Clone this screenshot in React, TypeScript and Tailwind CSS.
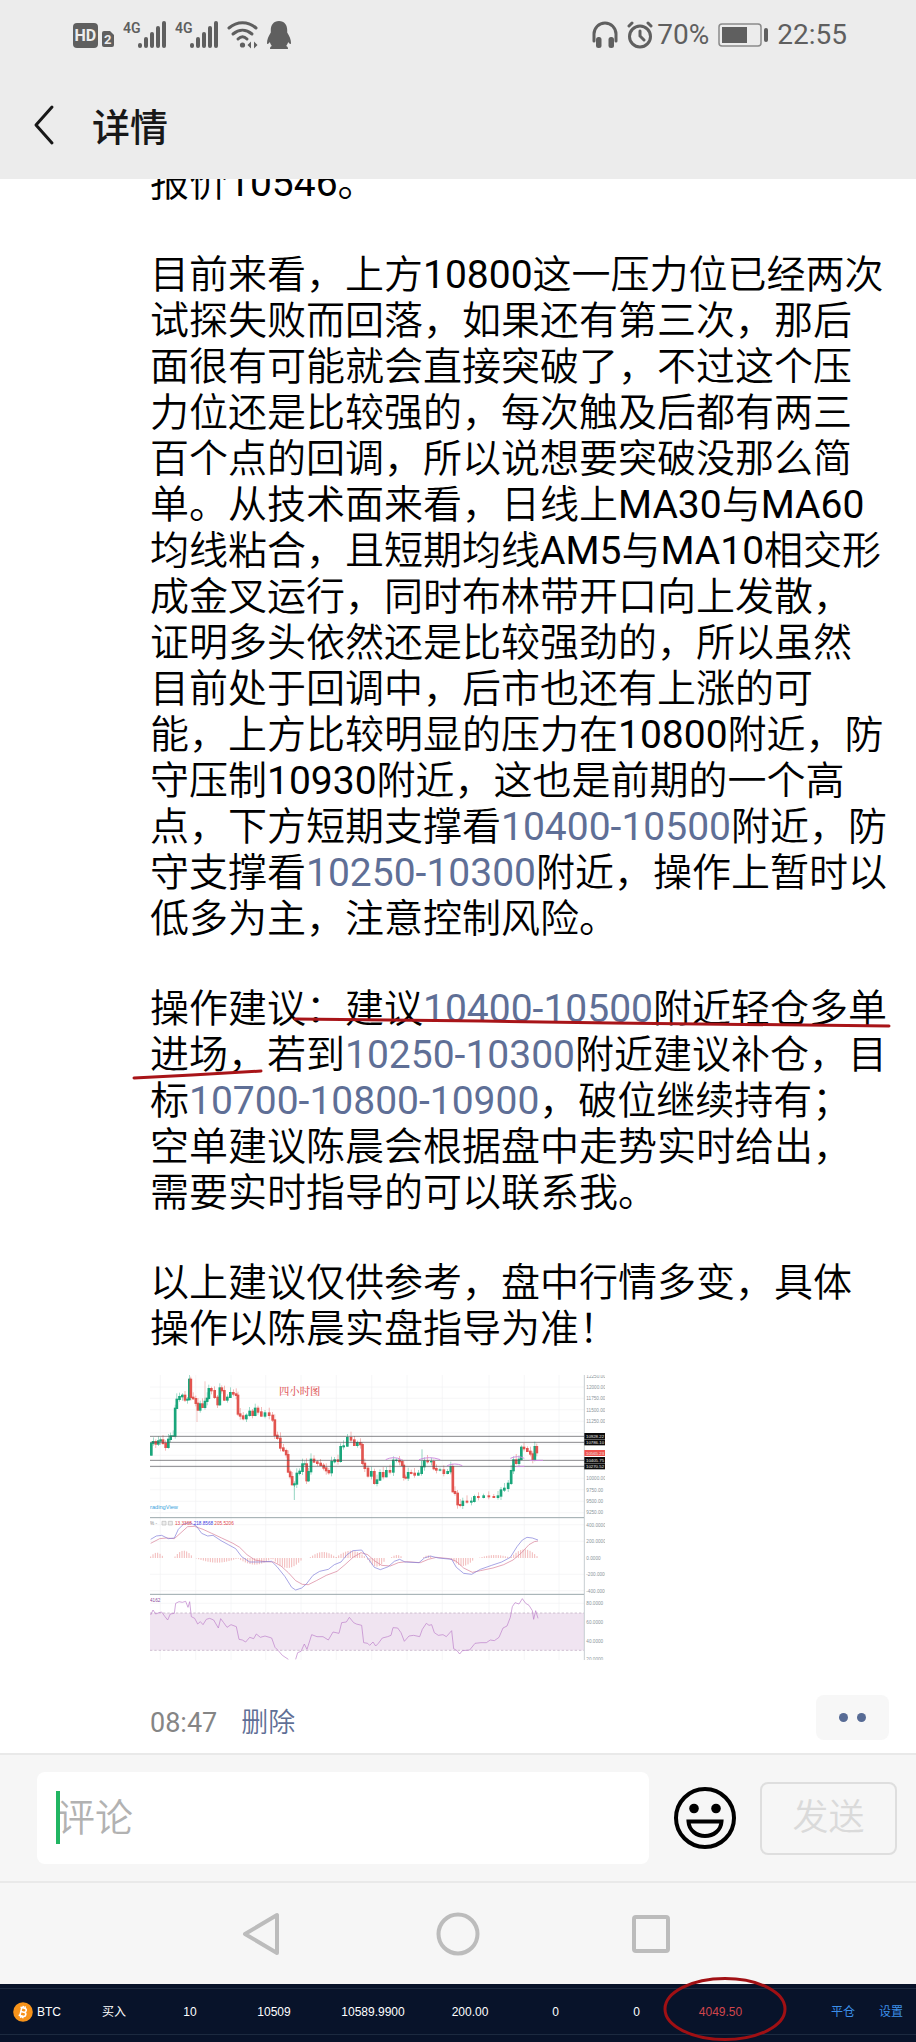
import type { ReactNode } from "react";

type Point = [number, number];

const PRICE: Point[] = [
  [33, 285], [37, 250], [45, 245], [52, 252], [60, 243], [66, 240], [74, 250], [82, 262], [90, 238], [96, 228],
  [105, 228], [108, 145], [115, 118], [124, 110], [132, 106], [140, 120], [147, 118], [151, 58], [156, 112],
  [165, 116], [172, 130], [178, 150], [185, 132], [192, 142], [200, 124], [205, 115], [210, 86], [220, 92],
  [230, 112], [238, 134], [243, 84], [250, 92], [258, 120], [268, 112], [276, 98], [286, 102], [293, 106],
  [297, 162], [306, 168], [315, 176], [325, 166], [335, 154], [343, 166], [350, 145], [360, 156], [370, 168],
  [382, 159], [395, 166], [403, 180], [408, 226], [418, 235], [426, 264], [436, 272], [443, 284], [448, 336],
  [455, 350], [460, 374], [468, 372], [475, 340], [485, 334], [492, 312], [499, 312], [503, 362], [510, 335],
  [518, 298], [528, 306], [538, 310], [548, 316], [556, 324], [563, 332], [572, 338], [580, 305], [590, 300],
  [600, 304], [606, 260], [618, 258], [628, 233], [640, 240], [648, 256], [658, 248], [666, 254], [671, 310],
  [680, 325], [690, 348], [700, 335], [708, 370], [716, 360], [726, 338], [735, 350], [745, 332], [757, 336],
  [765, 301], [775, 301], [784, 305], [791, 316], [794, 352], [802, 354], [809, 338], [820, 340], [830, 345],
  [842, 340], [850, 320], [858, 303], [870, 305], [880, 305], [885, 326], [895, 330], [907, 330], [918, 340],
  [930, 335], [937, 320], [942, 395], [950, 400], [958, 434], [965, 436], [974, 424], [990, 426], [1000, 424],
  [1008, 410], [1024, 412], [1040, 408], [1055, 410], [1070, 412], [1080, 408], [1088, 390], [1100, 385],
  [1111, 370], [1118, 332], [1125, 300], [1134, 310], [1142, 298], [1148, 262], [1158, 266], [1168, 274],
  [1176, 282], [1183, 298], [1188, 260], [1195, 278],
];

const RSI: Point[] = [
  [33, 765], [40, 750], [48, 762], [58, 758], [66, 756], [76, 770], [84, 780], [92, 762], [104, 760], [108, 730],
  [118, 725], [128, 727], [138, 724], [145, 742], [150, 725], [155, 770], [165, 775], [174, 792], [182, 785],
  [190, 794], [200, 778], [210, 775], [222, 780], [236, 804], [243, 776], [252, 788], [262, 802], [274, 794],
  [290, 800], [298, 838], [308, 840], [318, 846], [330, 832], [342, 836], [350, 822], [362, 832], [376, 828],
  [396, 834], [406, 862], [416, 872], [428, 886], [446, 898],
];
const RSI_LATE: Point[] = [
  [468, 898], [474, 878], [484, 874], [494, 852], [502, 868], [516, 824], [532, 830], [550, 830], [566, 840],
  [580, 816], [598, 820], [606, 788], [620, 786], [629, 772], [642, 788], [650, 792], [666, 796], [672, 848],
  [684, 850], [690, 856], [700, 846], [708, 858], [716, 850], [728, 834], [744, 830], [754, 826], [760, 803],
  [774, 804], [784, 818], [794, 844], [808, 828], [822, 826], [840, 830], [848, 808], [860, 790], [868, 796],
  [876, 794], [884, 818], [896, 826], [910, 824], [920, 830], [936, 812], [942, 866], [952, 872], [960, 882],
  [968, 872], [990, 870], [1006, 850], [1024, 848], [1040, 848], [1052, 840], [1064, 842], [1078, 832],
  [1090, 804], [1102, 798], [1112, 772], [1118, 740], [1126, 728], [1138, 732], [1148, 716], [1158, 730],
  [1168, 736], [1178, 752], [1182, 778], [1188, 752], [1195, 775],
];

const MACD: Point[] = [
  [33, 538], [50, 528], [66, 526], [86, 536], [104, 534], [116, 508], [132, 492], [150, 488], [170, 498],
  [186, 520], [204, 528], [220, 526], [244, 542], [266, 554], [288, 566], [306, 590], [330, 606], [360, 606],
  [396, 604], [412, 620], [436, 650], [456, 682], [468, 690], [486, 684], [500, 672], [520, 646], [540, 634],
  [566, 628], [584, 614], [604, 606], [622, 584], [640, 572], [666, 570], [684, 594], [704, 622], [722, 629],
  [746, 620], [764, 604], [780, 598], [796, 606], [838, 608], [854, 594], [872, 588], [896, 594], [936, 598],
  [950, 622], [972, 640], [996, 643], [1022, 628], [1056, 616], [1086, 606], [1112, 592], [1132, 560],
  [1148, 540], [1162, 532], [1178, 534], [1195, 540],
];
const SIGNAL: Point[] = [
  [33, 550], [60, 536], [80, 534], [104, 536], [124, 518], [144, 500], [164, 499], [190, 508], [216, 520],
  [246, 534], [280, 550], [300, 562], [322, 584], [346, 600], [376, 605], [402, 606], [424, 618], [446, 638],
  [468, 662], [488, 673], [506, 674], [530, 662], [560, 646], [592, 634], [616, 614], [640, 592], [664, 578],
  [684, 584], [704, 602], [726, 616], [752, 618], [776, 608], [800, 605], [842, 608], [866, 598], [890, 592],
  [930, 596], [950, 604], [972, 624], [998, 637], [1022, 632], [1060, 624], [1092, 614], [1120, 600],
  [1146, 578], [1168, 554], [1184, 545], [1195, 543],
];

// [start, end, peak]; a negative peak hangs below the zero line
const HISTOGRAM: [number, number, number][] = [
  [33, 72, 16], [106, 160, 22], [170, 296, -14], [296, 398, -20], [400, 490, -30], [512, 590, 18],
  [590, 680, 22], [684, 740, -26], [756, 790, 9], [852, 880, 8], [936, 1005, -24], [1020, 1115, 9],
  [1115, 1196, 26],
];

const AXIS: [string, number][] = [
  ["12250.00", 53], ["12000.00", 87], ["11750.00", 121], ["11500.00", 155], ["11250.00", 189],
  ["10000.00", 361], ["9750.00", 395], ["9500.00", 429], ["9250.00", 463],
  ["400.0000", 500], ["200.0000", 550], ["0.0000", 599], ["-200.0000", 648], ["-400.0000", 698],
  ["80.0000", 736], ["60.0000", 792], ["40.0000", 849], ["20.0000", 904],
];

const TAGS: [string, number, string][] = [
  ["10928.22", 228, "#0b0b0b"],
  ["10786.10", 247, "#0b0b0b"],
  ["10565.23", 279, "#f05350"],
  ["10405.75", 300, "#0b0b0b"],
  ["10270.52", 319, "#0b0b0b"],
];

const toLine = (points: Point[]) => points.map((p) => p.join(",")).join(" ");

const Chart = () => {
  const bars: ReactNode[] = [];
  HISTOGRAM.forEach(([start, end, peak]) => {
    for (let x = start; x < end; x += 7) {
      const h = Math.sin(((x - start + 4) / (end - start + 6)) * Math.PI) * peak;
      bars.push(
        <line key={`${start}-${x}`} x1={x} x2={x} y1={594} y2={594 - h} stroke="#eb9595" strokeWidth={2} />
      );
    }
  });

  return (
    <svg
      viewBox="31 45 1365 855"
      className="block w-[455px] max-w-full"
      role="img"
      aria-label="四小时图"
      fontFamily='"Liberation Sans", "Noto Sans CJK SC", sans-serif'
    >
      <rect x={31} y={45} width={1365} height={855} fill="#fff" />
      <g stroke="#f1f3f4" strokeWidth={2}>
        {[62, 168, 274, 378, 484, 590, 696, 802, 908, 1048, 1154, 1258].map((x) => (
          <line key={x} x1={x} x2={x} y1={45} y2={900} />
        ))}
        {[81, 115, 149, 184, 218, 252, 286, 321, 355, 389, 424, 458, 494, 544, 643, 692, 730, 787].map((y) => (
          <line key={y} x1={31} x2={1333} y1={y} y2={y} />
        ))}
      </g>

      <rect x={31} y={759} width={1302} height={112} fill="#f0e4f1" />
      <path d="M31 759H1333M31 871H1333" stroke="#b9a6bd" strokeWidth={2} strokeDasharray="7 6" />
      <path d="M31 473H1333M31 703H1333" stroke="#9ba8ab" strokeWidth={3} />
      <path d="M1334 45V900" stroke="#a9b4b9" strokeWidth={2} />

      {PRICE.slice(1).map(([x, y], i) => {
        const prev = PRICE[i];
        const color = y <= prev[1] ? "#1aa67b" : "#e2544f";
        const top = Math.min(y, prev[1]) - 2;
        const bottom = Math.max(y, prev[1]) + 2;
        const wick = 4 + ((i * 7) % 13);
        const mid = (x + prev[0]) / 2;
        return (
          <g key={x} fill={color}>
            <rect x={mid - 1} y={top - wick} width={2} height={bottom - top + wick + ((i * 5) % 11)} opacity={0.6} />
            <rect x={mid - 4} y={top} width={8} height={bottom - top} />
          </g>
        );
      })}
      <path d="M464 370V420M847 268V330" stroke="#1aa67b" strokeWidth={2} opacity={0.7} />
      <path d="M172 130V186M196 64V120" stroke="#e2544f" strokeWidth={2} opacity={0.5} />
      <path d="M31 229H1333M31 247H1333M31 301H1333M31 319H1333" stroke="#4c4c50" strokeWidth={2} />
      <g fill="none" stroke="#cf8fe0" strokeWidth={3}>
        <path d="M738 299q24-12 48 0" />
        <path d="M838 299q30-12 64 0" />
        <path d="M922 317q24-10 46 0" />
        <path d="M1112 295q22-10 42 0" />
        <path d="M1130 319h24M1170 301h40" />
      </g>

      {bars}
      <polyline points={toLine(SIGNAL)} fill="none" stroke="#d67a94" strokeWidth={2} />
      <polyline points={toLine(MACD)} fill="none" stroke="#7b78d8" strokeWidth={2} />
      <polyline points={toLine(RSI)} fill="none" stroke="#bb7cc9" strokeWidth={2} />
      <polyline points={toLine(RSI_LATE)} fill="none" stroke="#bb7cc9" strokeWidth={2} />

      <text x={418} y={106} fontSize={31} fontWeight={500} fill="#e0595b" fontFamily='"Noto Serif CJK SC", "Noto Sans CJK SC", serif'>
        四小时图
      </text>
      <text x={31} y={448} fontSize={17} fill="#3ba4dc">radingView</text>
      <g fontSize={14}>
        <text x={31} y={495} fill="#888">% -</text>
        <text x={106} y={495} fill="#e0464a">13.3368</text>
        <text x={162} y={495} fill="#3c3ce0">218.8568</text>
        <text x={224} y={495} fill="#e0464a">205.5206</text>
        <text x={31} y={725} fill="#8a4d9c">4162</text>
      </g>
      <path d="M67 484h12v11h-12zM86 484h12v11h-12z" fill="#eee" stroke="#bbb" strokeWidth={2} />

      <g fontSize={14} fill="#8b959b">
        {AXIS.map(([label, y]) => (
          <text key={label} x={1340} y={y}>{label}</text>
        ))}
      </g>
      {TAGS.map(([label, y, fill]) => (
        <g key={label}>
          <rect x={1334} y={y - 9} width={62} height={18} fill={fill} />
          <text x={1339} y={y + 5} fontSize={13} fill="#e6e6e6">{label}</text>
        </g>
      ))}
    </svg>
  );
};

const Signal = () => (
  <svg viewBox="0 0 44 28" className="h-7 w-11" fill="#5f5f5f" aria-hidden="true">
    <text x="0" y="12" fontSize="14" fontWeight="600" fontFamily='"Roboto", sans-serif'>4G</text>
    <rect x="15" y="22" width="4" height="5" rx="2" />
    <rect x="21" y="16" width="4" height="11" rx="2" />
    <rect x="27" y="11" width="4" height="16" rx="2" />
    <rect x="33" y="5" width="4" height="22" rx="2" />
    <rect x="39" y="0" width="4" height="27" rx="2" />
  </svg>
);

const StatusBar = () => (
  <div className="flex h-[70px] items-center justify-between pl-[73px] pr-[69px] text-[28px] leading-none text-[#5f5f5f]">
    <div className="flex items-center">
      <svg viewBox="0 0 42 28" className="h-7 w-[42px]" aria-hidden="true" fontFamily='"Roboto", sans-serif' fontWeight="700">
        <rect x="0" y="2" width="25" height="25" rx="4" fill="#5f5f5f" />
        <text x="1.500" y="20" fontSize="16" fill="#ececec">HD</text>
        <path d="M29 12a2 2 0 0 1 2-2h6l4 4v10a2 2 0 0 1-2 2h-8a2 2 0 0 1-2-2z" fill="#5f5f5f" />
        <text x="31" y="23" fontSize="13" fill="#ececec">2</text>
      </svg>
      <div className="ml-2 flex gap-2">
        <Signal />
        <Signal />
      </div>
      <svg viewBox="0 0 32 28" className="ml-2 h-7 w-8" fill="none" stroke="#5f5f5f" strokeWidth="3" strokeLinecap="round" aria-hidden="true">
        <path d="M2 7C10 0 21 0 29 7" />
        <path d="M6 13c6-5 13-5 19 0" />
        <path d="M11 18c3-3 6-3 9 0" />
        <circle cx="15.500" cy="24" r="2.600" fill="#5f5f5f" stroke="none" />
        <path d="M24 20.500v7L20.500 24zM27 20.500v7l3.500-3.500z" fill="#5f5f5f" stroke="none" />
      </svg>
      <svg viewBox="0 0 24 28" className="ml-2 h-7 w-6" fill="#5f5f5f" aria-hidden="true">
        <path d="M12 0C6.500 0 3.800 4 3.800 9v2.500C1.500 15 0 18.500 0 22c0 1.500 1 1.500 2.800-1 .4 1.500 1 2.800 2 4-1.300.5-1.800 1.300-1.800 3h18c0-1.700-.5-2.500-1.800-3 1-1.200 1.600-2.500 2-4 1.800 2.500 2.800 2.500 2.800 1 0-3.500-1.500-7-3.800-10.500V9C20.200 4 17.500 0 12 0z" />
      </svg>
    </div>
    <div className="flex items-center">
      <svg viewBox="0 0 26 28" className="h-7 w-[26px]" aria-hidden="true">
        <path d="M2 20V13a11 11 0 0 1 22 0V20" fill="none" stroke="#5f5f5f" strokeWidth="3" strokeLinecap="round" />
        <rect x="4" y="16" width="5.500" height="11" rx="2.500" fill="#5f5f5f" />
        <rect x="16.500" y="16" width="5.500" height="11" rx="2.500" fill="#5f5f5f" />
      </svg>
      <svg viewBox="0 0 26 28" className="ml-[9px] h-7 w-[26px]" fill="none" stroke="#5f5f5f" strokeWidth="3" strokeLinecap="round" aria-hidden="true">
        <circle cx="13" cy="15.500" r="10.500" />
        <path d="M13 10v5l4 4M2 5l3-3M24 5l-3-3" />
      </svg>
      <span className="ml-1">70%</span>
      <svg viewBox="0 0 50 24" className="ml-[9px] h-6 w-[50px]" aria-hidden="true">
        <rect x="1" y="1" width="42" height="22" rx="3" fill="none" stroke="#8a8a8a" strokeWidth="1.500" />
        <rect x="4" y="4" width="25" height="16" fill="#5f5f5f" />
        <rect x="46" y="5" width="4" height="14" rx="2" fill="#5f5f5f" />
      </svg>
      <span className="ml-[9px]">22:55</span>
    </div>
  </div>
);

const Num = ({ children }: { children: ReactNode }) => (
  <a href="#quote" className="text-[#5f6f96]">{children}</a>
);

const Article = () => (
  <article className="pl-[150px] pr-[27px] text-[39px] leading-[46px] text-black">
    <p className="-mt-[19px]">报价10546。</p>
    <p className="mt-[46px]">
      目前来看，上方10800这一压力位已经两次试探失败而回落，如果还有第三次，那后面很有可能就会直接突破了，不过这个压力位还是比较强的，每次触及后都有两三百个点的回调，所以说想要突破没那么简单。从技术面来看，日线上MA30与MA60均线粘合，且短期均线AM5与MA10相交形成金叉运行，同时布林带开口向上发散，证明多头依然还是比较强劲的，所以虽然目前处于回调中，后市也还有上涨的可能，上方比较明显的压力在10800附近，防守压制10930附近，这也是前期的一个高点，下方短期支撑看<Num>10400-10500</Num>附近，防守支撑看<Num>10250-10300</Num>附近，操作上暂时以低多为主，注意控制风险。
    </p>
    <div className="relative mt-11">
      <p>
        操作建议：建议<Num>10400-10500</Num>附近轻仓多单进场，若到<Num>10250-10300</Num>附近建议补仓，目标<Num>10700-10800-10900</Num>，破位继续持有；
        <br />
        空单建议陈晨会根据盘中走势实时给出，需要实时指导的可以联系我。
      </p>
      <svg viewBox="0 0 760 100" className="pointer-events-none absolute -left-[18px] top-0 h-[100px] w-[760px]" fill="none" stroke="#a81418" strokeWidth="3" strokeLinecap="round" aria-hidden="true">
        <path d="M163 33L350 35L480 37L757 40" />
        <path d="M2 92L60 89L129 85" />
      </svg>
    </div>
    <p className="mt-11">以上建议仅供参考，盘中行情多变，具体操作以陈晨实盘指导为准！</p>
    <div className="mt-[23px]">
      <Chart />
    </div>
    <div className="mt-[35px] flex items-end pb-[13px] text-[27px] leading-[34px]">
      <time className="text-[#858585]">08:47</time>
      <button className="ml-6 text-[#5f6f96]">删除</button>
      <button aria-label="更多" className="ml-auto flex h-[45px] w-[73px] items-center justify-center gap-[9px] rounded-lg bg-[#f7f7f7]">
        <span className="size-[9px] rounded-full bg-[#576b95]" />
        <span className="size-[9px] rounded-full bg-[#576b95]" />
      </button>
    </div>
  </article>
);

const Composer = () => (
  <form className="flex items-center border-t-2 border-[#e9e9e9] bg-[#f6f6f6] pb-[17px] pl-[37px] pr-[19px] pt-[17px]">
    <div className="relative min-w-0 flex-1">
      <input
        aria-label="评论"
        placeholder="评论"
        className="block h-[92px] w-full rounded-lg bg-white pl-5 pr-4 text-[38px] text-[#111] outline-none placeholder:text-[#b2b2b2]"
      />
      <span className="pointer-events-none absolute left-[19px] top-[19px] h-[53px] w-1 bg-[#21b562]" />
    </div>
    <button type="button" aria-label="表情" className="ml-6">
      <svg viewBox="0 0 64 64" className="block size-16" fill="none" stroke="#000" strokeWidth="4">
        <circle cx="32" cy="32" r="29" />
        <circle cx="21" cy="22.500" r="4.800" fill="#000" stroke="none" />
        <circle cx="43" cy="22.500" r="4.800" fill="#000" stroke="none" />
        <path d="M15.500 35.500H48.500C48 44.500 40.500 50 32 50S16 44.500 15.500 35.500z" />
      </svg>
    </button>
    <button type="button" className="ml-[23px] h-[73px] w-[137px] rounded-lg border-2 border-[#dedede] text-[36px] font-light text-[#dadada]">
      发送
    </button>
  </form>
);

const NavBar = () => (
  <nav className="flex h-[103px] items-center justify-center gap-[152px] border-t-2 border-[#e9e9e9] bg-[#f6f6f6]">
    <button aria-label="返回">
      <svg viewBox="0 0 44 44" className="block size-11" fill="none" stroke="#bcbcbc" strokeWidth="4" strokeLinejoin="round">
        <path d="M5 22L37 3V41z" />
      </svg>
    </button>
    <button aria-label="主页">
      <svg viewBox="0 0 44 44" className="block size-11" fill="none" stroke="#bcbcbc" strokeWidth="4">
        <circle cx="22" cy="22" r="19.500" />
      </svg>
    </button>
    <button aria-label="最近任务">
      <svg viewBox="0 0 44 44" className="block size-11" fill="none" stroke="#bcbcbc" strokeWidth="4">
        <rect x="2" y="5" width="34" height="34" rx="2" />
      </svg>
    </button>
  </nav>
);

const Positions = () => (
  <div className="relative bg-[#08132a] py-1 font-['Liberation_Sans','Noto_Sans_CJK_SC',sans-serif] text-xs text-white">
    <table className="w-full table-fixed text-center">
      <tbody>
        <tr className="h-[46px] border-y border-[#1c2a40]">
          <td className="w-[76px] pl-[13px]">
            <div className="flex items-center gap-1">
              <svg viewBox="0 0 20 20" className="size-5 shrink-0" aria-hidden="true">
                <circle cx="10" cy="10" r="9.800" fill="#f7931a" />
                <g transform="rotate(13 10 10)" fill="none" stroke="#fff" strokeWidth="1.600">
                  <path d="M7.800 6v8.200M6.500 6h4.300a2 2 0 0 1 0 4H8M10.800 10h.4a2.100 2.100 0 0 1 0 4.200H6.500M9 4v2M11 4v2M9 14.200v2M11 14.200v2" />
                </g>
              </svg>
              <span>BTC</span>
            </div>
          </td>
          <td className="w-[76px]">买入</td>
          <td className="w-[76px]">10</td>
          <td className="w-[92px]">10509</td>
          <td className="w-[106px]">10589.9900</td>
          <td className="w-[88px]">200.00</td>
          <td className="w-[83px]">0</td>
          <td className="w-[79px]">0</td>
          <td className="w-[89px] text-[#d0454c]">4049.50</td>
          <td className="pr-[13px] text-right text-[#3c8fe8]">
            <a href="#close">平仓</a>
            <a href="#settings" className="ml-6">设置</a>
          </td>
        </tr>
      </tbody>
    </table>
    <div className="h-1" />
    <svg viewBox="0 0 124 66" className="pointer-events-none absolute -top-2 left-[663px] h-[66px] w-[124px]" fill="none" stroke="#a01014" strokeWidth="3" aria-hidden="true">
      <ellipse cx="62" cy="33" rx="60" ry="30.500" />
    </svg>
  </div>
);

const App = () => {
  return (
    <div className="min-h-screen bg-white font-['Roboto','Noto_Sans_CJK_SC_DemiLight','Noto_Sans_CJK_SC',sans-serif]">
      <header className="bg-[#ececec]">
        <StatusBar />
        <div className="flex h-[109px] items-center pl-8">
          <button aria-label="返回">
            <svg viewBox="0 0 24 42" className="block h-[42px] w-6" fill="none" stroke="#181818" strokeWidth="3" strokeLinecap="round" strokeLinejoin="round">
              <path d="M20 3L4 21L20 39" />
            </svg>
          </button>
          <h1 className="ml-9 font-['Noto_Sans_CJK_SC',sans-serif] text-[38px] font-medium leading-none text-[#181818]">详情</h1>
        </div>
      </header>
      <main className="overflow-hidden">
        <Article />
      </main>
      <Composer />
      <NavBar />
      <Positions />
    </div>
  );
};

export default App;
